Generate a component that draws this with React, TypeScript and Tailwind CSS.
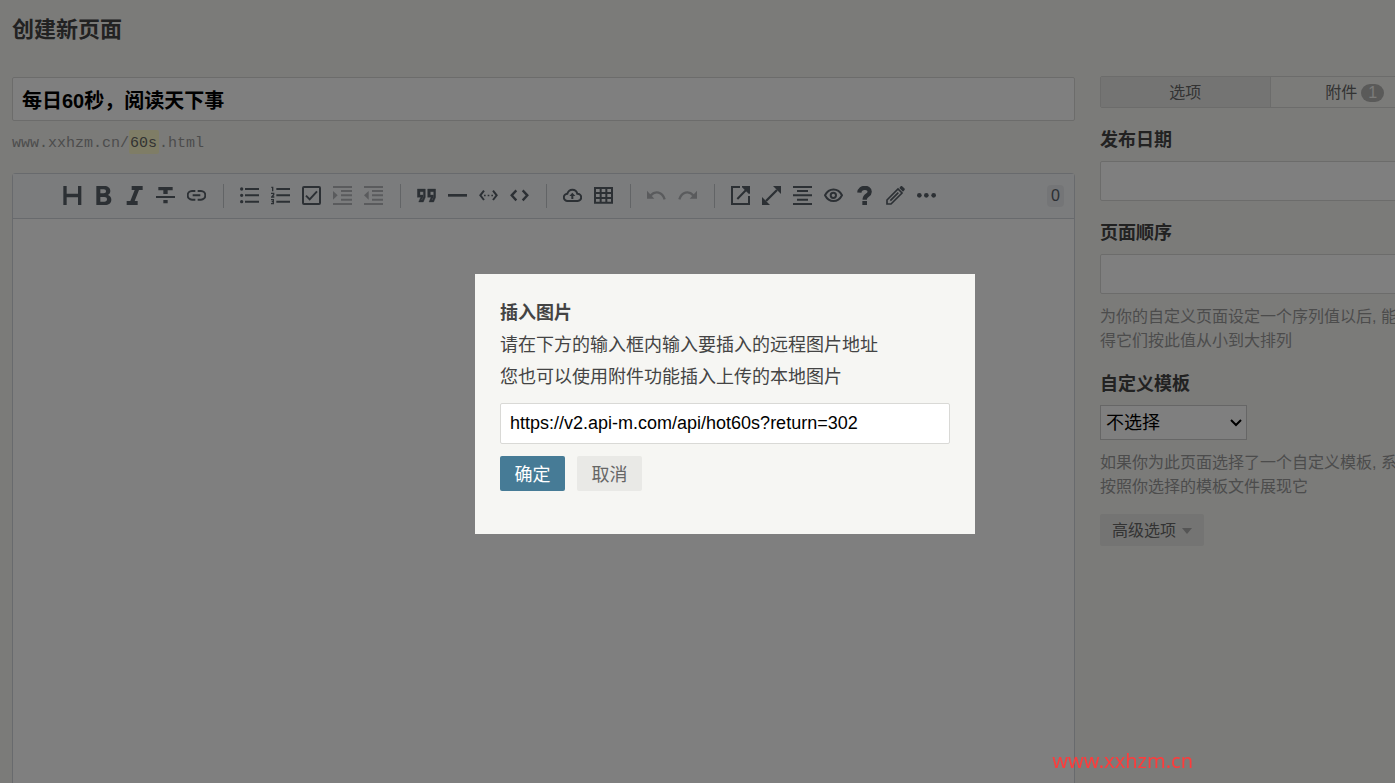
import { useState } from "react";
import type { ReactNode } from "react";

type Tool = { name: string; icon: ReactNode; disabled?: boolean };

// All toolbar icons share a 57x57 box
const TOOL_GROUPS: Tool[][] = [
  [
    { name: "标题", icon: <path d="M1 0h10v23h34V0h10v57H45V34H11v23H1z" fill="currentColor" stroke="none" /> },
    {
      name: "粗体",
      icon: (
        <path
          d="M7 0h24c11 0 18 6 18 15 0 6-3 10-7 12 6 2 10 7 10 14 0 10-8 16-19 16H7zM19 10v12h10c5 0 7-2 7-6s-2-6-7-6zM19 33v14h12c5 0 8-2 8-7s-3-7-8-7z"
          fill="currentColor"
          fillRule="evenodd"
          stroke="none"
        />
      ),
    },
    { name: "斜体", icon: <path d="M20 0h33v12H42L29 45h9v12H5V45h11l13-33h-9z" fill="currentColor" stroke="none" /> },
    {
      name: "删除线",
      icon: <path d="M7 3h43v10H35v11H22V13H7zM0 30h57v6H0zM22 42h13v10H22z" fill="currentColor" stroke="none" />,
    },
    {
      name: "链接",
      icon: <path d="M25 15H15a12 12 0 0 0 0 26h10M32 15h10a12 12 0 0 1 0 26H32M17 28h23" strokeWidth="6" />,
    },
  ],
  [
    {
      name: "无序列表",
      icon: (
        <>
          <path d="M15 9h42M15 28h42M15 47h42" strokeWidth="6" />
          <path d="M0 9a5 5 0 1 0 10 0a5 5 0 1 0-10 0M0 28a5 5 0 1 0 10 0a5 5 0 1 0-10 0M0 47a5 5 0 1 0 10 0a5 5 0 1 0-10 0" fill="currentColor" stroke="none" />
        </>
      ),
    },
    {
      name: "有序列表",
      icon: (
        <>
          <path d="M16 9h41M16 28h41M16 47h41" strokeWidth="6" />
          <path d="M1 4h4v12M0 22h8v4l-6 7h8M0 41h7v12H0M2 47h5" strokeWidth="4" />
        </>
      ),
    },
    {
      name: "任务列表",
      icon: (
        <>
          <rect x="3" y="3" width="51" height="51" rx="3" strokeWidth="6" />
          <path d="M12 29l11 11 22-24" strokeWidth="6" />
        </>
      ),
    },
    {
      name: "列表缩进",
      disabled: true,
      icon: (
        <>
          <path d="M0 3h57M24 15h33M24 28h33M24 41h33M0 54h57" strokeWidth="6" />
          <path d="M0 15l14 13L0 41z" fill="currentColor" stroke="none" />
        </>
      ),
    },
    {
      name: "列表反向缩进",
      disabled: true,
      icon: (
        <>
          <path d="M0 3h57M24 15h33M24 28h33M24 41h33M0 54h57" strokeWidth="6" />
          <path d="M14 15L0 28l14 13z" fill="currentColor" stroke="none" />
        </>
      ),
    },
  ],
  [
    {
      name: "引用",
      icon: (
        <path
          d="M1 9h24v25L19 48H5l6-14H1zM9 17v10h9v7l-5 8h2l4-9V17zM32 9h24v25l-6 14H36l6-14H32zM40 17v10h9v7l-5 8h2l4-9V17z"
          fill="currentColor"
          fillRule="evenodd"
          strokeWidth="1"
        />
      ),
    },
    { name: "分隔线", icon: <path d="M0 28h57" strokeWidth="8" /> },
    {
      name: "代码块",
      icon: (
        <>
          <path d="M15 14L4 28l11 14M42 14l11 14-11 14" strokeWidth="6" />
          <path d="M15 26h5v5h-5zM26 26h5v5h-5zM37 26h5v5h-5z" fill="currentColor" stroke="none" />
        </>
      ),
    },
    { name: "行内代码", icon: <path d="M19 13L5 28l14 15M38 13l14 15-14 15" strokeWidth="7" /> },
  ],
  [
    {
      name: "上传",
      icon: (
        <>
          <path d="M14 45a11 11 0 0 1-1-22C16 14 21 11 28 11s13 4 15 12a11 11 0 0 1 1 22z" strokeWidth="6" />
          <path d="M28 20l9 10h-6v9h-6v-9h-6z" fill="currentColor" stroke="none" />
        </>
      ),
    },
    {
      name: "表格",
      icon: <path d="M3 6h51v44H3zM3 21h51M3 36h51M20 6v44M37 6v44" strokeWidth="6" />,
    },
  ],
  [
    {
      name: "撤销",
      disabled: true,
      icon: (
        <>
          <path d="M11 28C25 13 46 18 53 40" strokeWidth="7" />
          <path d="M0 14l22 24H0z" fill="currentColor" stroke="none" />
        </>
      ),
    },
    {
      name: "重做",
      disabled: true,
      icon: (
        <>
          <path d="M46 28C32 13 11 18 4 40" strokeWidth="7" />
          <path d="M57 14L35 38h22z" fill="currentColor" stroke="none" />
        </>
      ),
    },
  ],
  [
    {
      name: "切换编辑模式",
      icon: (
        <>
          <path d="M27 3H3v51h51V30M19 39L51 6" strokeWidth="6" />
          <path d="M33 0h24v23h-4L33 4z" fill="currentColor" stroke="none" />
        </>
      ),
    },
    {
      name: "全屏",
      icon: (
        <>
          <path d="M12 45L45 12" strokeWidth="7" />
          <path d="M33 0h24v24zM0 33l24 24H0z" fill="currentColor" stroke="none" />
        </>
      ),
    },
    { name: "大纲", icon: <path d="M0 3h57M12 15h33M0 28h57M12 41h33M0 54h57" strokeWidth="6" /> },
    {
      name: "预览",
      icon: (
        <>
          <path d="M3 28C15 5 42 5 54 28 42 51 15 51 3 28z" strokeWidth="6" />
          <circle cx="28" cy="28" r="8" strokeWidth="6" />
        </>
      ),
    },
    {
      name: "帮助",
      icon: (
        <>
          <path d="M13 20C14 2 44 1 44 17c0 12-15 10-15 24" strokeWidth="13" />
          <path d="M22 45h14v12H22z" fill="currentColor" stroke="none" />
        </>
      ),
    },
    {
      name: "编辑",
      icon: (
        <>
          <path d="M3 54V42L36 9l12 12L15 54zM13 44l24-24" strokeWidth="5" />
          <path d="M40 6l4-5c2-2 4-1 6 1l5 5c2 2 2 4 0 6l-4 4z" fill="currentColor" stroke="none" />
        </>
      ),
    },
    {
      name: "更多",
      icon: (
        <g fill="currentColor" stroke="none">
          <circle cx="7" cy="28" r="7" />
          <circle cx="28" cy="28" r="7" />
          <circle cx="50" cy="28" r="7" />
        </g>
      ),
    },
  ],
];

const ToolButton = ({ tool }: { tool: Tool }) => (
  <button
    type="button"
    aria-label={tool.name}
    disabled={tool.disabled}
    className="flex h-11 w-[31px] shrink-0 items-center justify-center pb-0.5 text-[#586069] disabled:text-[#b4b7bb]"
  >
    <svg viewBox="0 0 57 57" className="size-[19px]" fill="none" stroke="currentColor">
      {tool.icon}
    </svg>
  </button>
);

const Toolbar = () => (
  <div className="flex h-[45px] items-center border-b border-[#d1d5da] bg-[#f6f8fa] pr-[10px] pl-11">
    {TOOL_GROUPS.map((group, i) => (
      <div key={i} className="flex items-center">
        {i > 0 && <span className="mr-[10px] ml-[11px] h-6 w-px bg-[#c4c8cc]" />}
        {group.map((tool) => (
          <ToolButton key={tool.name} tool={tool} />
        ))}
      </div>
    ))}
    <span className="ml-auto rounded-sm bg-[#e9ebee] px-1 text-base leading-[22px] text-[#586069]">0</span>
  </div>
);

const Sidebar = () => (
  <aside className="w-[340px] text-base">
    <div className="flex h-8 rounded-xs border border-[#d9d9d6] text-[#666]">
      <button type="button" className="flex-1 border-r border-[#d9d9d6] bg-[#e9e9e6] pt-0.5">
        选项
      </button>
      <button type="button" className="flex flex-1 items-center justify-center gap-1 pt-0.5">
        附件
        <span className="rounded-full bg-[#b5b5b3] px-[7px] leading-[18px] text-[#f6f6f3]">1</span>
      </button>
    </div>

    <label htmlFor="date" className="mt-5 mb-[9px] block text-lg leading-6 font-bold text-[#444]">
      发布日期
    </label>
    <input id="date" type="text" className="block h-10 w-full rounded-xs border border-[#d9d9d6] bg-white px-2" />

    <label htmlFor="order" className="mt-5 mb-[9px] block text-lg leading-6 font-bold text-[#444]">
      页面顺序
    </label>
    <input id="order" type="text" className="block h-10 w-full rounded-xs border border-[#d9d9d6] bg-white px-2" />
    <p className="mt-[11px] leading-6 text-[#999]">为你的自定义页面设定一个序列值以后, 能够使得它们按此值从小到大排列</p>

    <label htmlFor="template" className="mt-[19px] mb-[9px] block text-lg leading-6 font-bold text-[#444]">
      自定义模板
    </label>
    <div className="relative w-[147px]">
      <select
        id="template"
        className="block h-[35px] w-full appearance-none border border-[#ccc] bg-white px-[5px] text-lg text-black"
      >
        <option>不选择</option>
      </select>
      <svg viewBox="0 0 12 8" className="pointer-events-none absolute top-[14px] right-[5px] h-2 w-3" fill="none" stroke="black" strokeWidth="2">
        <path d="M1 1l5 5 5-5" />
      </svg>
    </div>
    <p className="mt-[11px] leading-6 text-[#999]">如果你为此页面选择了一个自定义模板, 系统将按照你选择的模板文件展现它</p>

    <button type="button" className="mt-[15px] flex h-8 items-center gap-1.5 rounded-xs bg-[#e9e9e6] px-3 pt-px text-[#666]">
      高级选项
      <svg viewBox="0 0 10 6" className="h-[6px] w-[10px]" fill="#aaa">
        <path d="M0 0h10L5 6z" />
      </svg>
    </button>
  </aside>
);

const InsertImageDialog = () => {
  const [url, setUrl] = useState("https://v2.api-m.com/api/hot60s?return=302");

  return (
    <div className="fixed inset-0 z-10 flex items-center justify-center bg-black/50 pt-[25px] pl-[55px]">
      <div role="dialog" aria-labelledby="dialog-title" className="h-[260px] w-[500px] bg-[#f6f6f3] px-[25px] pt-[23px] text-[#444]">
        <h3 id="dialog-title" className="text-lg leading-8 font-bold">
          插入图片
        </h3>
        <label htmlFor="image-url" className="block text-lg leading-8">
          请在下方的输入框内输入要插入的远程图片地址
          <br />
          您也可以使用附件功能插入上传的本地图片
        </label>
        <input
          id="image-url"
          type="text"
          value={url}
          onChange={(e) => setUrl(e.target.value)}
          className="mt-[10px] block h-[41px] w-full rounded-xs border border-[#d9d9d6] bg-white px-[9px] text-lg text-black"
        />
        <div className="mt-3 flex gap-3 text-lg">
          <button type="button" className="h-[35px] w-[65px] rounded-xs bg-[#467b96] pt-0.5 text-white">
            确定
          </button>
          <button type="button" className="h-[35px] w-[65px] rounded-xs bg-[#e9e9e6] pt-0.5 text-[#666]">
            取消
          </button>
        </div>
      </div>
    </div>
  );
};

export default function App() {
  const [title, setTitle] = useState("每日60秒，阅读天下事");
  const [slug, setSlug] = useState("60s");

  return (
    <div className="flex h-screen flex-col overflow-hidden bg-[#f6f6f3] pl-3 font-['Liberation_Sans','Noto_Sans_CJK_SC',sans-serif]">
      <h2 className="pt-3 text-[22px] leading-9 font-bold text-[#444]">创建新页面</h2>

      <div className="mt-7 grid min-h-0 flex-1 grid-cols-[minmax(0,1fr)_295px] gap-[25px]">
        <main className="flex min-h-0 flex-col pt-px">
          <input
            type="text"
            aria-label="标题"
            value={title}
            onChange={(e) => setTitle(e.target.value)}
            className="h-11 shrink-0 rounded-xs border border-[#d9d9d6] bg-white px-[9px] text-xl font-bold text-black"
          />
          <p className="mt-[9px] flex h-6 shrink-0 items-center font-['Liberation_Mono',monospace] text-[15px] text-[#999]">
            <span className="pt-1">www.xxhzm.cn/</span>
            <input
              type="text"
              aria-label="页面地址"
              value={slug}
              onChange={(e) => setSlug(e.target.value)}
              className="h-6 w-[30px] rounded-xs bg-[#fffbcc] px-px pt-0.5 text-[#666]"
            />
            <span className="pt-1">.html</span>
          </p>

          <div className="mt-[19px] min-h-0 flex-1 rounded-t-sm border border-b-0 border-[#d1d5da] bg-white">
            <Toolbar />
          </div>
        </main>

        <Sidebar />
      </div>

      <InsertImageDialog />
      <span className="fixed right-[202px] bottom-2 z-20 font-['Noto_Sans',sans-serif] text-xl leading-7 text-[#ff3b3b]">
        www.xxhzm.cn
      </span>
    </div>
  );
}
